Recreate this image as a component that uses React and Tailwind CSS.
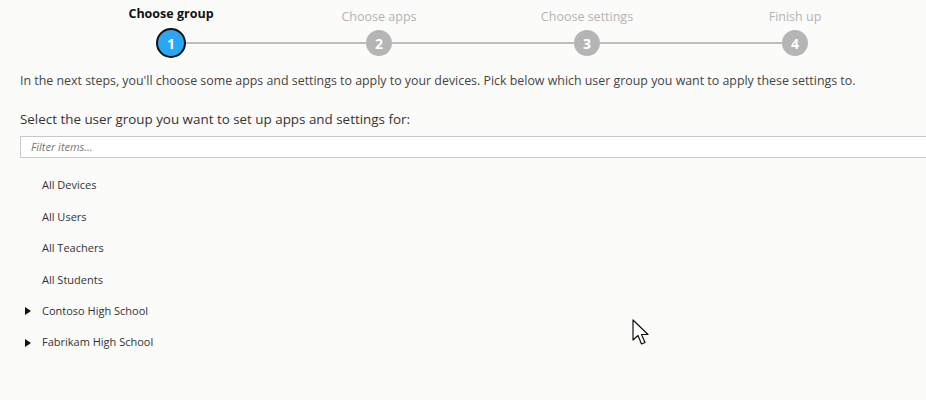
import React from 'react'

const steps = ['Choose group', 'Choose apps', 'Choose settings', 'Finish up']
const groups = [
  { name: 'All Devices' },
  { name: 'All Users' },
  { name: 'All Teachers' },
  { name: 'All Students' },
  { name: 'Contoso High School', expandable: true },
  { name: 'Fabrikam High School', expandable: true },
]

function Cursor(){
  return (
    <svg width="20" height="28" viewBox="0 0 20 28" className="absolute left-[632px] top-[319px]">
      <path d="M1 1 L1 21 L6 16.5 L9.5 25 L13 23.5 L9.5 15.5 L16 15.5 Z" fill="#fff" stroke="#111" strokeWidth="1.2" strokeLinejoin="round" />
    </svg>
  )
}

export default function App(){
  return (
    <div className="relative w-[926px] h-[400px] overflow-hidden bg-[#fbfbfa] text-[#444]" style={{fontFamily:'"Open Sans", "Noto Sans", sans-serif'}}>
      {/* stepper */}
      <div className="grid grid-cols-[208px_208px_208px_208px] ml-[67px] pt-[5px] h-[28px]">
        {steps.map((s,i)=>(
          <div key={s} className={i===0 ? 'text-center text-[12.5px] font-bold text-[#111] leading-[18px]' : 'text-center text-[12.5px] text-[#b3b3b3] leading-[18px] pt-[3px]'}>{s}</div>
        ))}
      </div>
      <div className="flex items-center ml-[156px] h-[30px]">
        <div className="w-[30px] h-[30px] rounded-full bg-[#2aa6f2] border-[2.5px] border-[#111] flex items-center justify-center text-white text-[14px] font-bold">1</div>
        <div className="w-[180px] h-[2px] bg-[#bdbdbd]"></div>
        <div className="w-[26px] h-[26px] rounded-full bg-[#b5b5b5] flex items-center justify-center text-white text-[14px] font-bold">2</div>
        <div className="w-[182px] h-[2px] bg-[#bdbdbd]"></div>
        <div className="w-[26px] h-[26px] rounded-full bg-[#b5b5b5] flex items-center justify-center text-white text-[14px] font-bold">3</div>
        <div className="w-[182px] h-[2px] bg-[#bdbdbd]"></div>
        <div className="w-[26px] h-[26px] rounded-full bg-[#b5b5b5] flex items-center justify-center text-white text-[14px] font-bold">4</div>
      </div>

      <main className="pl-[20px]">
        <p className="mt-[14px] text-[12.4px] leading-[18px] text-[#444]">In the next steps, you'll choose some apps and settings to apply to your devices. Pick below which user group you want to apply these settings to.</p>
        <h2 className="mt-[19px] text-[13.4px] leading-[20px] text-[#333]">Select the user group you want to set up apps and settings for:</h2>
        <div className="mt-[7px] w-[920px] h-[22px] border border-[#c8c8c8] bg-white flex items-center px-[10px]">
          <span className="text-[11px] italic text-[#777]">Filter items...</span>
        </div>
        <ul className="mt-[12px]">
          {groups.map(g=>(
            <li key={g.name} className="flex items-center h-[31.4px] text-[11px] text-[#333]">
              <span className="w-[22px] flex items-center pl-[5px]">
                {g.expandable && (
                  <svg width="6" height="8" viewBox="0 0 6 8"><path d="M0 0 L6 4 L0 8 Z" fill="#111" /></svg>
                )}
              </span>
              <span>{g.name}</span>
            </li>
          ))}
        </ul>
      </main>
      <Cursor />
    </div>
  )
}
